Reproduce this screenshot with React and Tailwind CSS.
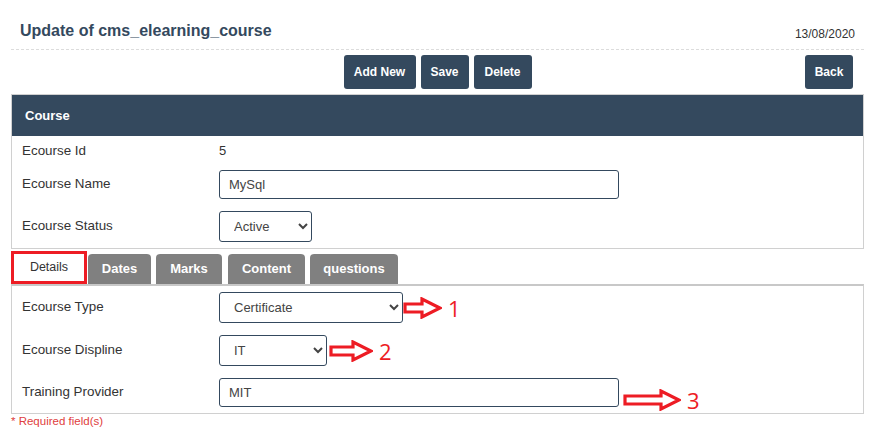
import React from "react";

const font = { fontFamily: '"Liberation Sans", Arial, sans-serif' };

function Arrow({ w = 40 }) {
  // hand-drawn style outlined red arrow
  const head = w - 20;
  return (
    <svg width={w} height="22" viewBox={`0 0 ${w} 22`} className="shrink-0">
      <path
        d={`M2 7 L${head} 7 L${head} 2 L${w - 2} 11 L${head} 20 L${head} 15 L2 15 Z`}
        fill="white"
        stroke="#ed1c24"
        strokeWidth="3.2"
        strokeLinejoin="miter"
      />
    </svg>
  );
}

function Row({ label, children, className = "" }) {
  return (
    <div className={"flex items-center " + className}>
      <div className="w-[207px] pl-[10px] text-[13.4px] text-[#333]">{label}</div>
      {children}
    </div>
  );
}

const num = { fontFamily: '"Open Sans", Arial, sans-serif' };

export default function App() {
  const tabs = [
    { name: "Dates", w: "w-[63px] ml-[1px]" },
    { name: "Marks", w: "w-[66px] ml-[5px]" },
    { name: "Content", w: "w-[77px] ml-[6px]" },
    { name: "questions", w: "w-[88px] ml-[5px]" },
  ];

  return (
    <div className="w-[879px] h-[438px] bg-white pl-[11px] pr-[15px]" style={font}>
      {/* title */}
      <div className="h-[50px] flex items-end justify-between px-[9px] pb-[8px] border-b border-dashed border-[#dcdcdc]">
        <h1 className="text-[16px] font-bold text-[#34495e] mb-[-2px]">Update of cms_elearning_course</h1>
        <span className="text-[12px] text-[#333] mb-[-2px]">13/08/2020</span>
      </div>

      {/* buttons */}
      <div className="grid grid-cols-[1fr_auto_1fr] items-center mt-[5px] h-[34px]">
        <div />
        <div className="flex gap-[5px]">
          <button className="h-[34px] w-[72px] rounded-[3px] bg-[#34495e] text-white text-[12px] font-bold">Add New</button>
          <button className="h-[34px] w-[48px] rounded-[3px] bg-[#34495e] text-white text-[12px] font-bold">Save</button>
          <button className="h-[34px] w-[58px] rounded-[3px] bg-[#34495e] text-white text-[12px] font-bold">Delete</button>
        </div>
        <div className="flex justify-end pr-[11px]">
          <button className="h-[34px] w-[48px] rounded-[3px] bg-[#34495e] text-white text-[12px] font-bold">Back</button>
        </div>
      </div>

      {/* course panel */}
      <div className="mt-[5px] border border-[#d0d0d0]">
        <div className="h-[41px] bg-[#34495e] flex items-center pl-[13px] text-white text-[13px] font-bold">Course</div>
        <Row label="Ecourse Id" className="h-[30px]">
          <span className="text-[13px] text-[#333]">5</span>
        </Row>
        <Row label="Ecourse Name" className="mt-[4px]">
          <input
            readOnly
            value="MySql"
            className="w-[400px] h-[29px] rounded-[3px] border border-[#34495e] px-[9px] text-[13px] text-[#444] outline-none"
          />
        </Row>
        <Row label="Ecourse Status" className="mt-[12px] mb-[6px]">
          <select className="w-[93px] h-[31px] rounded-[3px] border border-[#34495e] pl-[10px] text-[13px] text-[#444] bg-white outline-none">
            <option>Active</option>
          </select>
        </Row>
      </div>

      {/* tabs */}
      <div className="flex items-end mt-[2px] h-[33px]">
        <div className="w-[76px] h-[33px] border-[3px] border-[#ed1c24] bg-white flex items-center justify-center text-[12.5px] text-[#333]">
          Details
        </div>
        {tabs.map((t) => (
          <div
            key={t.name}
            className={"h-[30px] rounded-t-[4px] bg-[#808080] flex items-center justify-center text-white text-[13px] font-bold " + t.w}
          >
            {t.name}
          </div>
        ))}
      </div>

      {/* details panel */}
      <div className="border border-[#d0d0d0] border-t-2 border-t-[#c8c8c8] pt-[6px] pb-[6px]">
        <Row label="Ecourse Type">
          <select className="w-[184px] h-[31px] rounded-[3px] border border-[#34495e] pl-[10px] text-[13px] text-[#444] bg-white outline-none">
            <option>Certificate</option>
          </select>
          <Arrow w={39} />
          <span className="ml-[6px] text-[22px] leading-none text-[#ed1c24]" style={num}>1</span>
        </Row>
        <Row label="Ecourse Displine" className="mt-[12px]">
          <select className="w-[108px] h-[31px] rounded-[3px] border border-[#34495e] pl-[10px] text-[13px] text-[#444] bg-white outline-none">
            <option>IT</option>
          </select>
          <span className="ml-[2px]"><Arrow w={44} /></span>
          <span className="ml-[6px] text-[22px] leading-none text-[#ed1c24]" style={num}>2</span>
        </Row>
        <Row label="Training Provider" className="mt-[12px]">
          <input
            readOnly
            value="MIT"
            className="w-[400px] h-[29px] rounded-[3px] border border-[#34495e] px-[9px] text-[13px] text-[#444] outline-none"
          />
          <span className="ml-[4px] translate-y-[7px]"><Arrow w={58} /></span>
          <span className="ml-[6px] translate-y-[7px] text-[22px] leading-none text-[#ed1c24]" style={num}>3</span>
        </Row>
      </div>

      <div className="text-[11.5px] leading-[14px] text-[#e04040]">* Required field(s)</div>
    </div>
  );
}
